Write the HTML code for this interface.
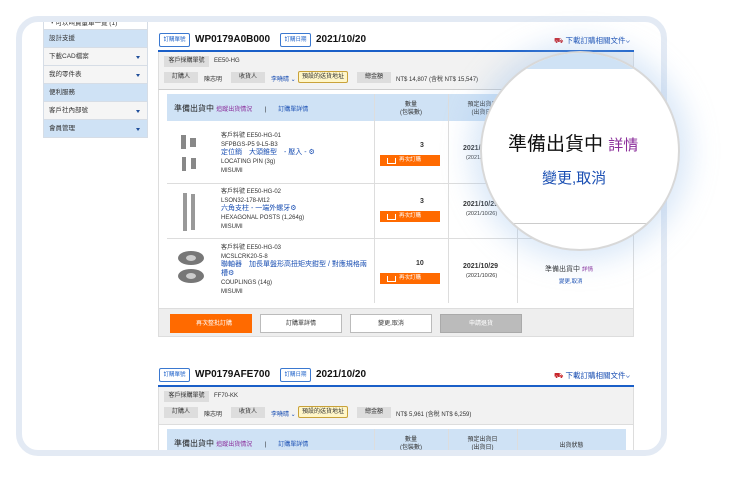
<!DOCTYPE html>
<html><head><meta charset="utf-8"><style>
*{margin:0;padding:0;box-sizing:border-box}
body{width:733px;height:494px;background:#fff;position:relative;overflow:hidden;font-family:"Liberation Sans","Noto Sans CJK TC",sans-serif;color:#333}
.frame{position:absolute;left:16px;top:16px;width:651px;height:440px;border:6px solid #e3eaf4;border-radius:22px}
.clip{position:absolute;left:22px;top:22px;width:639px;height:428px;overflow:hidden;border-radius:16px}
.in{position:absolute;left:-22px;top:-22px;width:733px;height:494px}
.a{position:absolute;white-space:nowrap}
.side div{position:absolute;left:43px;width:105px;height:18px;font-size:6.5px;line-height:18px;padding-left:5px;border-bottom:1px solid #d6dde6;border-left:1px solid #d6dde6;border-right:1px solid #d6dde6;color:#333}
.side .b{background:#cfe2f5}
.side .g{background:#f5f5f5}
.side .g:after{content:"";position:absolute;right:7px;top:8px;border:2.5px solid transparent;border-top:3px solid #1f4e9a}
.tag{position:absolute;height:14px;width:31px;border:1px solid #3a78d0;border-radius:2px;color:#1a5fc8;font-size:5.5px;line-height:12px;text-align:center}
.big{position:absolute;font-size:10px;font-weight:bold;color:#111}
.lab{position:absolute;height:11px;background:#ddd;font-size:6px;line-height:11px;text-align:center;color:#333}
.t{font-size:6px;color:#333}
.btn{position:absolute;width:60px;height:11px;background:#ff6a00;color:#fff;font-size:5.5px;line-height:11px;text-align:center}
.btn:before{content:"";position:absolute;left:7px;top:3px;width:7px;height:5px;border:1.5px solid #fff;border-top:none}
.bb{position:absolute;top:314px;width:82px;height:19px;font-size:6px;line-height:19px;text-align:center;border:1px solid #bbb;background:#fff}
.lnk{color:#1a4fb3}
.pur{color:#8a2c9a}
</style></head><body>
<div class="frame"></div>
<div class="clip"><div class="in">
<div class="side">
<div style="top:16px;height:14px;line-height:16px;background:#fff">・可以叫貨量單一覽 (1)</div>
<div class="b" style="top:30px">設計支援</div>
<div class="g" style="top:48px">下載CAD檔案</div>
<div class="g" style="top:66px">我的零件表</div>
<div class="b" style="top:84px">便利服務</div>
<div class="g" style="top:102px">客戶社內部號</div>
<div class="b g" style="top:120px;background:#cfe2f5">會員管理</div>
</div>

<!-- order 1 -->
<div class="tag" style="left:159px;top:33px">訂購單號</div>
<div class="big" style="left:195px;top:34px">WP0179A0B000</div>
<div class="tag" style="left:280px;top:33px">訂購日期</div>
<div class="big" style="left:316px;top:34px">2021/10/20</div>
<div class="a lnk" style="left:554px;top:35px;font-size:7.5px"><span style="color:#c8262b">⛟</span> 下載訂購相關文件⌄</div>
<div class="a" style="left:158px;top:50px;width:476px;height:2px;background:#1a5fc8"></div>
<div class="a" style="left:158px;top:52px;width:476px;height:37px;background:#f2f2f2;border-left:1px solid #ddd;border-right:1px solid #ddd"></div>
<div class="lab" style="left:164px;top:56px;width:45px">客戶採購單號</div>
<div class="a t" style="left:214px;top:58px">EE50-HG</div>
<div class="lab" style="left:164px;top:72px;width:34px">訂購人</div>
<div class="a t" style="left:204px;top:74px">陳志明</div>
<div class="lab" style="left:231px;top:72px;width:34px">收貨人</div>
<div class="a t lnk" style="left:271px;top:74px">李曉晴 ⌄</div>
<div class="a t" style="left:298px;top:71px;width:50px;height:12px;border:1px solid #c9a23a;background:#fff6c8;border-radius:2px;text-align:center;line-height:10px">預設的送貨地址</div>
<div class="lab" style="left:357px;top:72px;width:34px">總金額</div>
<div class="a t" style="left:396px;top:74px">NT$ 14,807 (含稅 NT$ 15,547)</div>
<div class="a" style="left:158px;top:89px;width:476px;height:248px;border:1px solid #ddd;border-top:1px solid #ccc;background:#fff"></div>
<div class="a" style="left:167px;top:94px;width:459px;height:27px;background:#cfe2f5"></div>
<div class="a" style="left:174px;top:103px;font-size:8px;color:#222">準備出貨中 <span class="pur" style="font-size:6px">追蹤出貨情況</span> <span style="font-size:6px;margin:0 10px">|</span> <span class="lnk" style="font-size:6px">訂購單詳情</span></div>
<div class="a" style="left:374px;top:94px;width:1px;height:209px;background:#ddd"></div>
<div class="a" style="left:448px;top:94px;width:1px;height:209px;background:#ddd"></div>
<div class="a" style="left:517px;top:94px;width:1px;height:209px;background:#ddd"></div>
<div class="a t" style="left:374px;top:101px;width:74px;text-align:center;line-height:8px">數量<br>(包裝數)</div>
<div class="a t" style="left:448px;top:101px;width:69px;text-align:center;line-height:8px">預定出貨日<br>(出貨日)</div>
<div class="a t" style="left:517px;top:105px;width:109px;text-align:center">出貨狀態</div>
<div class="a" style="left:167px;top:183px;width:459px;height:1px;background:#ddd"></div>
<div class="a" style="left:167px;top:238px;width:459px;height:1px;background:#ddd"></div>

<svg class="a" style="left:176px;top:133px" width="28" height="42"><g fill="#888"><rect x="5" y="2" width="5" height="14"/><rect x="14" y="5" width="6" height="9"/><rect x="6" y="24" width="4" height="14"/><rect x="15" y="25" width="5" height="11"/></g></svg>
<svg class="a" style="left:176px;top:191px" width="28" height="44"><g fill="#999"><rect x="7" y="2" width="4" height="38"/><rect x="15" y="3" width="4" height="36"/></g></svg>
<svg class="a" style="left:176px;top:250px" width="30" height="36"><g fill="#777"><ellipse cx="15" cy="8" rx="13" ry="7"/><ellipse cx="15" cy="26" rx="13" ry="7"/></g><g fill="#ccc"><ellipse cx="15" cy="8" rx="5" ry="3"/><ellipse cx="15" cy="26" rx="5" ry="3"/></g></svg>

<div class="a t" style="left:221px;top:132px;line-height:8.7px">客戶料號 EE50-HG-01<br>SFPBGS-P5 9-L5-B3<br><span class="lnk" style="font-size:7px">定位銷　大頭錐型　- 壓入 - ⚙</span><br>LOCATING PIN (3g)<br>MISUMI</div>
<div class="a t" style="left:221px;top:188px;line-height:8.7px">客戶料號 EE50-HG-02<br>LSON32-178-M12<br><span class="lnk" style="font-size:7px">六角支柱 - 一端外螺牙⚙</span><br>HEXAGONAL POSTS (1,264g)<br>MISUMI</div>
<div class="a t" style="left:221px;top:244px;line-height:8.7px">客戶料號 EE50-HG-03<br>MCSLCRK20-5-8<br><span class="lnk" style="font-size:7px">聯軸器　加長單盤形高扭矩夾鉗型 / 對應規格兩</span><br><span class="lnk" style="font-size:7px">槽⚙</span><br>COUPLINGS (14g)<br>MISUMI</div>

<div class="a" style="left:420px;top:142px;font-size:7px;font-weight:bold">3</div>
<div class="btn" style="left:380px;top:155px">再次訂購</div>
<div class="a" style="left:420px;top:198px;font-size:7px;font-weight:bold">3</div>
<div class="btn" style="left:380px;top:211px">再次訂購</div>
<div class="a" style="left:416px;top:260px;font-size:7px;font-weight:bold">10</div>
<div class="btn" style="left:380px;top:273px">再次訂購</div>
<div class="a" style="left:463px;top:145px;font-size:7px;font-weight:bold">2021/10/29</div>
<div class="a" style="left:466px;top:155px;font-size:5.5px">(2021/10/26)</div>
<div class="a" style="left:463px;top:201px;font-size:7px;font-weight:bold">2021/10/29</div>
<div class="a" style="left:466px;top:211px;font-size:5.5px">(2021/10/26)</div>
<div class="a" style="left:463px;top:263px;font-size:7px;font-weight:bold">2021/10/29</div>
<div class="a" style="left:466px;top:273px;font-size:5.5px">(2021/10/26)</div>
<div class="a" style="left:545px;top:264px;font-size:7px">準備出貨中 <span class="pur" style="font-size:5.5px">詳情</span></div>
<div class="a lnk" style="left:559px;top:277px;font-size:5.5px">變更,取消</div>

<div class="a" style="left:159px;top:308px;width:474px;height:28px;background:#eee;border-top:1px solid #ddd"></div>
<div class="bb" style="left:170px;background:#ff6a00;color:#fff;border-color:#ff6a00">　再次整批訂購</div>
<div class="bb" style="left:260px">訂購單詳情</div>
<div class="bb" style="left:350px">變更,取消</div>
<div class="bb" style="left:440px;background:#bbb;color:#fff;border-color:#aaa">申請退貨</div>

<!-- order 2 -->
<div class="tag" style="left:159px;top:368px">訂購單號</div>
<div class="big" style="left:195px;top:369px">WP0179AFE700</div>
<div class="tag" style="left:280px;top:368px">訂購日期</div>
<div class="big" style="left:316px;top:369px">2021/10/20</div>
<div class="a lnk" style="left:554px;top:370px;font-size:7.5px"><span style="color:#c8262b">⛟</span> 下載訂購相關文件⌄</div>
<div class="a" style="left:158px;top:385px;width:476px;height:2px;background:#1a5fc8"></div>
<div class="a" style="left:158px;top:387px;width:476px;height:37px;background:#f2f2f2;border-left:1px solid #ddd;border-right:1px solid #ddd"></div>
<div class="lab" style="left:164px;top:391px;width:45px">客戶採購單號</div>
<div class="a t" style="left:214px;top:393px">FF70-KK</div>
<div class="lab" style="left:164px;top:407px;width:34px">訂購人</div>
<div class="a t" style="left:204px;top:409px">陳志明</div>
<div class="lab" style="left:231px;top:407px;width:34px">收貨人</div>
<div class="a t lnk" style="left:271px;top:409px">李曉晴 ⌄</div>
<div class="a t" style="left:298px;top:406px;width:50px;height:12px;border:1px solid #c9a23a;background:#fff6c8;border-radius:2px;text-align:center;line-height:10px">預設的送貨地址</div>
<div class="lab" style="left:357px;top:407px;width:34px">總金額</div>
<div class="a t" style="left:396px;top:409px">NT$ 5,961 (含稅 NT$ 6,259)</div>
<div class="a" style="left:158px;top:424px;width:476px;height:40px;border:1px solid #ddd;background:#fff"></div>
<div class="a" style="left:167px;top:429px;width:459px;height:27px;background:#cfe2f5"></div>
<div class="a" style="left:174px;top:438px;font-size:8px;color:#222">準備出貨中 <span class="pur" style="font-size:6px">追蹤出貨情況</span> <span style="font-size:6px;margin:0 10px">|</span> <span class="lnk" style="font-size:6px">訂購單詳情</span></div>
<div class="a" style="left:374px;top:429px;width:1px;height:27px;background:#ddd"></div>
<div class="a" style="left:448px;top:429px;width:1px;height:27px;background:#ddd"></div>
<div class="a" style="left:517px;top:429px;width:1px;height:27px;background:#ddd"></div>
<div class="a t" style="left:374px;top:436px;width:74px;text-align:center;line-height:8px">數量<br>(包裝數)</div>
<div class="a t" style="left:448px;top:436px;width:69px;text-align:center;line-height:8px">預定出貨日<br>(出貨日)</div>
<div class="a t" style="left:517px;top:440px;width:109px;text-align:center">出貨狀態</div>
</div></div>

<!-- magnifier -->
<div class="a" style="left:480px;top:51px;width:200px;height:200px;border-radius:50%;overflow:hidden;background:#fff;border:2px solid #d8d8d8;box-shadow:0 0 28px 10px rgba(150,190,235,.35)">
<div class="a" style="left:0;top:0;width:200px;height:16px;background:#cfe2f5"></div>
<div class="a" style="left:0;top:170px;width:200px;height:1px;background:#ccc"></div>
<div class="a" style="left:26px;top:76px;font-size:19px;color:#111">準備出貨中 <span class="pur" style="font-size:15px">詳情</span></div>
<div class="a lnk" style="left:60px;top:114px;font-size:15px">變更,取消</div>
</div>
</body></html>
